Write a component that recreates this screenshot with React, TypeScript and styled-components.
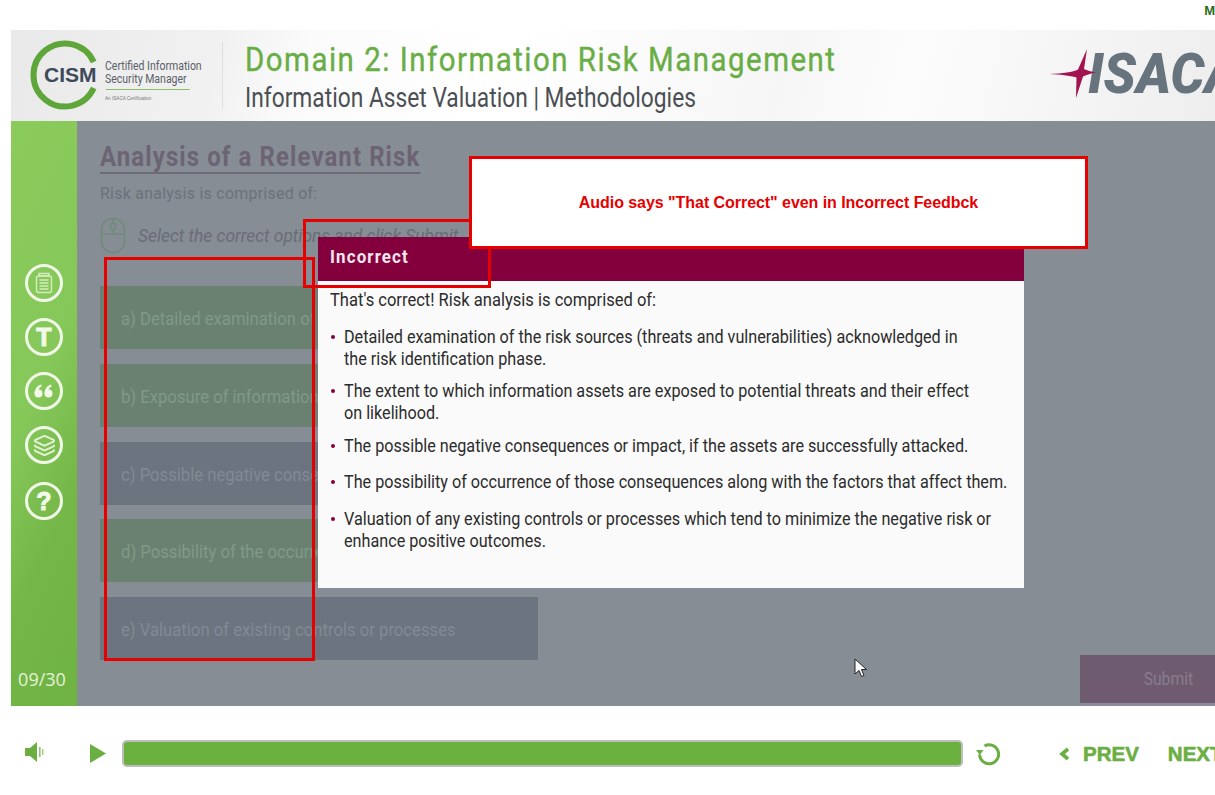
import React, { FC } from 'react'
import styled, { createGlobalStyle } from 'styled-components'
import { Layers } from 'lucide-react'

const narrow = `Roboto, "Liberation Sans", sans-serif`

const GlobalStyle = createGlobalStyle`
  html, body {
    margin: 0;
    padding: 0;
    background: #fff;
    overflow: hidden;
  }
`

const options = [
  { label: 'a) Detailed examination of risk sources', tone: 'green' },
  { label: 'b) Exposure of information assets', tone: 'green' },
  { label: 'c) Possible negative consequences', tone: 'gray' },
  { label: 'd) Possibility of the occurrence', tone: 'green' },
  { label: 'e) Valuation of existing controls or processes', tone: 'gray' },
]

const feedback = [
  ['Detailed examination of the risk sources (threats and vulnerabilities) acknowledged in', 'the risk identification phase.'],
  ['The extent to which information assets are exposed to potential threats and their effect', 'on likelihood.'],
  ['The possible negative consequences or impact, if the assets are successfully attacked.'],
  ['The possibility of occurrence of those consequences along with the factors that affect them.'],
  ['Valuation of any existing controls or processes which tend to minimize the negative risk or', 'enhance positive outcomes.'],
]

const CismLogo: FC = () => (
  <LogoWrap>
    <Ring viewBox="0 0 70 70">
      <path d="M63.700 22 A31.500 31.500 0 1 0 63.700 48" fill="none" stroke="#5ea63a" strokeWidth="6" />
    </Ring>
    <CismText>CISM</CismText>
    <LogoCopy>
      <LogoLine>Certified Information</LogoLine>
      <LogoLine>Security Manager</LogoLine>
      <LogoRule />
      <LogoSmall>An ISACA Certification</LogoSmall>
    </LogoCopy>
  </LogoWrap>
)

const NotesIcon: FC = () => (
  <svg width="20" height="22" viewBox="0 0 20 22" fill="none" stroke="#d5ecc0" strokeWidth="1.4">
    <path d="M5 1.500h10v2.500H5z" />
    <rect x="2.500" y="4" width="15" height="16.500" rx="2" />
    <path d="M5.500 8h9M5.500 11h9M5.500 14h9M5.500 17h9" />
  </svg>
)

const QuoteIcon: FC = () => (
  <svg width="20" height="14" viewBox="0 0 20 14" fill="#f2f9ea">
    <circle cx="4.500" cy="9.500" r="4" />
    <path d="M0.600 9C0.800 5 3 1.500 7 0.500L7.800 2.200C5.500 3.200 4.500 5 4.500 7z" />
    <circle cx="14.500" cy="9.500" r="4" />
    <path d="M10.600 9C10.800 5 13 1.500 17 0.500L17.800 2.200C15.500 3.200 14.500 5 14.500 7z" />
  </svg>
)

const MouseIcon: FC = () => (
  <svg width="26" height="37" viewBox="0 0 26 37" fill="none" stroke="#6e8c78" strokeWidth="1.6">
    <rect x="1.500" y="1.500" width="23" height="34" rx="11" />
    <path d="M1.500 17h23M13 1.500V6M13 13v4" />
    <rect x="10.500" y="6" width="5" height="7" rx="2.500" />
  </svg>
)

export default function App() {
  return (
    <Page>
      <GlobalStyle />
      <TopStrip>M</TopStrip>
      <Stage>
        <Header>
          <CismLogo />
          <HeaderDivider />
          <Titles>
            <DomainTitle>Domain 2: Information Risk Management</DomainTitle>
            <TopicTitle>Information Asset Valuation | Methodologies</TopicTitle>
          </Titles>
          <IsacaLogo>
            <IsacaText>ISACA</IsacaText>
            <Star viewBox="0 0 48 50">
              <path d="M0 25 C14 24.500 24 23 29 20.500 L38 0 L35 20 C38 21.500 42 22.500 47 23.500 C42 24.500 38 25.500 34 27.500 L27 49 L27.500 28.500 C20 26.500 12 25.500 0 25Z" fill="#a3134f" />
            </Star>
          </IsacaLogo>
        </Header>
        <Body>
          <Sidebar>
            <NavIcon><NotesIcon /></NavIcon>
            <NavIcon>T</NavIcon>
            <NavIcon><QuoteIcon /></NavIcon>
            <NavIcon><Layers size={23} strokeWidth={2} color="#e4f3d6" /></NavIcon>
            <NavIcon $drop>?</NavIcon>
            <Counter>09/30</Counter>
          </Sidebar>
          <Content>
            <SlideTitle>Analysis of a Relevant Risk</SlideTitle>
            <Lead>Risk analysis is comprised of:</Lead>
            <Instruction>
              <MouseIcon />
              <InstructionText>Select the correct options and click Submit</InstructionText>
            </Instruction>
            <OptionList>
              {options.map(o => (
                <OptionRow key={o.label} $tone={o.tone}>
                  <OptionLabel>{o.label}</OptionLabel>
                </OptionRow>
              ))}
            </OptionList>
            <SubmitButton><SubmitLabel>Submit</SubmitLabel></SubmitButton>
          </Content>
          <Dialog>
            <DialogHead><DialogTitle>Incorrect</DialogTitle></DialogHead>
            <DialogBody>
              <DialogIntro>That&apos;s correct! Risk analysis is comprised of:</DialogIntro>
              <BulletList>
                {feedback.map(lines => (
                  <Bullet key={lines[0]} $single={lines.length === 1}>
                    {lines.map(l => <BulletLine key={l}>{l}</BulletLine>)}
                  </Bullet>
                ))}
              </BulletList>
            </DialogBody>
          </Dialog>
        </Body>
      </Stage>
      <Controls>
        <SoundButton>
          <svg width="19" height="20" viewBox="0 0 19 20" fill="#6bae42">
            <path d="M0 6h5l7-6v20l-7-6H0z" />
            <path d="M14 5h1.600v10H14zM17.200 7h1.200v6h-1.200z" opacity="0.75" />
          </svg>
        </SoundButton>
        <PlayButton>
          <svg width="16" height="19" viewBox="0 0 16 19" fill="#6bae42"><path d="M0 0l16 9.500L0 19z" /></svg>
        </PlayButton>
        <Progress />
        <ReplayButton>
          <svg width="26" height="26" viewBox="0 0 26 26" fill="none" stroke="#6bae42" strokeWidth="3">
            <path d="M8.500 5A9.500 9.500 0 1 1 3.600 13.500" />
            <path d="M0 9h7.500l-3.700 5z" fill="#6bae42" stroke="none" />
          </svg>
        </ReplayButton>
        <NavLink $first>
          <svg width="11" height="14" viewBox="0 0 11 14" fill="none" stroke="#6bae42" strokeWidth="3.600">
            <path d="M9 2L3 7l6 5" />
          </svg>
          <span>PREV</span>
        </NavLink>
        <NavLink>NEXT</NavLink>
      </Controls>

      <RedFrame $kind="options" />
      <RedFrame $kind="head" />
      <Note>Audio says &quot;That Correct&quot; even in Incorrect Feedbck</Note>
      <Cursor viewBox="0 0 13 21">
        <path d="M1 1v15l4-3.500 2.500 6 2.500-1-2.500-6H12.500z" fill="#fff" stroke="#222" strokeWidth="1" />
      </Cursor>
    </Page>
  )
}

const Page = styled.div`
  position: relative;
  width: 1215px;
  height: 795px;
  overflow: hidden;
  background: #fff;
`

const TopStrip = styled.div`
  height: 30px;
  padding-top: 3px;
  box-sizing: border-box;
  text-align: right;
  font: bold 13px "Liberation Sans", sans-serif;
  color: #2f6b14;
  line-height: 15px;
`

const Stage = styled.div`
  width: 1240px;
  margin-left: 11px;
`

const Header = styled.header`
  height: 91px;
  display: flex;
  align-items: center;
  background: linear-gradient(105deg, #e9e9e9 0%, #f1f1f1 17%, #fbfbfb 24%, #fff 40%, #f6f6f6 62%, #fcfcfc 72%, #ececec 100%);
`

const LogoWrap = styled.div`
  position: relative;
  width: 211px;
  height: 91px;
  flex: none;
`

const Ring = styled.svg`
  position: absolute;
  left: 19px;
  top: 10px;
  width: 70px;
  height: 70px;
`

const CismText = styled.span`
  position: absolute;
  left: 33px;
  top: 33px;
  font: bold 21px "Liberation Sans", sans-serif;
  color: #3d4a5c;
`

const LogoCopy = styled.div`
  position: absolute;
  left: 94px;
  top: 29px;
  width: 120px;
  white-space: nowrap;
  transform: scaleX(0.84);
  transform-origin: left;
`

const LogoLine = styled.div`
  font: 12.5px/13px ${narrow};
  color: #59606a;
`

const LogoRule = styled.div`
  height: 1px;
  width: 100px;
  margin: 4px 0 5px 1px;
  background: #8cbf6d;
`

const LogoSmall = styled.div`
  font: 5.5px/7px "Liberation Sans", sans-serif;
  color: #777;
`

const HeaderDivider = styled.div`
  width: 1px;
  height: 67px;
  background: #dedede;
  flex: none;
`

const Titles = styled.div`
  margin-left: 22px;
  margin-top: 2px;
  display: flex;
  flex-direction: column;
  gap: 4px;
  white-space: nowrap;
  transform-origin: left;
`

const DomainTitle = styled.h1`
  margin: 0;
  font: normal 34px/38px ${narrow};
  letter-spacing: 1.75px;
  color: #69ad45;
  -webkit-text-stroke: 0.4px #69ad45;
  transform: scaleX(0.865);
  transform-origin: left;
`

const TopicTitle = styled.h2`
  margin: 0;
  font: normal 27px/32px ${narrow};
  color: #4b4f54;
  transform: scaleX(0.843);
  transform-origin: left;
`

const IsacaLogo = styled.div`
  position: relative;
  margin-left: auto;
  margin-right: 37px;
  width: 165px;
  height: 50px;
  margin-top: -3px;
  flex: none;
`

const Star = styled.svg`
  position: absolute;
  left: 0;
  top: 0;
  width: 48px;
  height: 50px;
`

const IsacaText = styled.span`
  position: absolute;
  left: 39px;
  top: -5px;
  font: italic 900 56px/60px ${narrow};
  color: #67747e;
  transform: scaleX(0.95);
  transform-origin: left;
`

const Body = styled.div`
  position: relative;
  display: flex;
  height: 585px;
  background: #868d95;
`

const Sidebar = styled.nav`
  width: 66px;
  flex: none;
  display: flex;
  flex-direction: column;
  align-items: center;
  gap: 16px;
  padding-top: 143px;
  box-sizing: border-box;
  background: linear-gradient(115deg, #8acb5c 0%, #86c759 45%, #74b648 70%, #6fb344 100%);
`

const NavIcon = styled.div<{ $drop?: boolean }>`
  width: 38px;
  height: 38px;
  margin-top: ${p => (p.$drop ? '2px' : '0')};
  box-sizing: border-box;
  border: 3px solid #f0f8e8;
  border-radius: 50%;
  display: flex;
  align-items: center;
  justify-content: center;
  font: 900 25px/1 "Liberation Sans", sans-serif;
  -webkit-text-stroke: 1px #f2f9ea;
  color: #f2f9ea;
`

const Counter = styled.div`
  margin-top: auto;
  margin-left: -4px;
  height: 54px;
  font: 18px/54px "Open Sans", sans-serif;
  color: #e4f3d6;
`

const Content = styled.main`
  flex: 1;
  display: flex;
  flex-direction: column;
  padding: 20px 20px 3px 23px;
  min-width: 0;
`

const SlideTitle = styled.h3`
  margin: 0;
  align-self: flex-start;
  font: bold 28px/31px ${narrow};
  letter-spacing: 1.3px;
  color: #6c6373;
  border-bottom: 2px solid #6f6a78;
  transform: scaleX(0.855);
  transform-origin: left;
`

const Lead = styled.p`
  margin: 9px 0 0;
  font: 17px/20px ${narrow};
  color: #6b727b;
  letter-spacing: 0.3px;
  transform: scaleX(0.935);
  transform-origin: left;
`

const Instruction = styled.div`
  display: flex;
  align-items: center;
  gap: 12px;
  margin-top: 14px;
  height: 38px;
`

const InstructionText = styled.span`
  font: italic 18px/22px ${narrow};
  color: #6a6c78;
  white-space: nowrap;
  transform: scaleX(0.965);
  transform-origin: left;
`

const OptionList = styled.div`
  width: 438px;
  margin-top: 32px;
  display: flex;
  flex-direction: column;
  gap: 14.75px;
`

const OptionRow = styled.div<{ $tone: string }>`
  height: 63px;
  padding-left: 21px;
  background: ${p => (p.$tone === 'green' ? '#6a8171' : '#6b747f')};
  color: ${p => (p.$tone === 'green' ? '#7f9a88' : '#828a94')};
`

const OptionLabel = styled.div`
  font: 19px/65px ${narrow};
  white-space: nowrap;
  transform: scaleX(0.877);
  transform-origin: left;
`

const SubmitButton = styled.div`
  align-self: flex-end;
  flex: none;
  width: 176px;
  height: 48px;
  margin-top: -5px;
  margin-right: -25px;
  text-align: center;
  background: #6f5b6f;
  color: #877d8c;
`

const SubmitLabel = styled.span`
  display: inline-block;
  font: 18px/48px ${narrow};
  transform: scaleX(0.87);
`

const Dialog = styled.section`
  position: absolute;
  left: 307px;
  top: 116px;
  width: 706px;
  height: 351px;
  background: #fafafa;
`

const DialogHead = styled.div`
  height: 44px;
  padding-left: 12px;
  background: #84003c;
  color: #f6e6ee;
`

const DialogTitle = styled.div`
  font: bold 18px/40px ${narrow};
  letter-spacing: 1.2px;
  transform: scaleX(0.94);
  transform-origin: left;
`

const DialogBody = styled.div`
  padding: 8px 12px 0;
`

const DialogIntro = styled.p`
  margin: 0;
  font: 17.6px/22px ${narrow};
  color: #2b2b2b;
  white-space: nowrap;
  transform: scaleX(0.94);
  transform-origin: left;
`

const BulletList = styled.ul`
  list-style: none;
  margin: 15px 0 0;
  padding: 0 0 0 14px;
  display: flex;
  flex-direction: column;
  gap: 10.3px;
`

const Bullet = styled.li<{ $single: boolean }>`
  position: relative;
  padding-bottom: ${p => (p.$single ? '4.6px' : '0')};
  font: 17.6px/22px ${narrow};
  color: #2b2b2b;
  &::before {
    content: '';
    position: absolute;
    left: -13px;
    top: 9px;
    width: 4px;
    height: 4px;
    border-radius: 50%;
    background: #84003c;
  }
`

const BulletLine = styled.div`
  white-space: nowrap;
  transform: scaleX(0.92);
  transform-origin: left;
`

const Controls = styled.footer`
  height: 89px;
  display: flex;
  align-items: center;
  box-sizing: border-box;
  padding: 6px 0 0 25px;
  position: relative;
  white-space: nowrap;
`

const SoundButton = styled.div`
  width: 19px;
  height: 20px;
  margin-top: -3px;
  flex: none;
`

const PlayButton = styled.div`
  margin-left: 46px;
  width: 16px;
  height: 19px;
  flex: none;
`

const Progress = styled.div`
  margin-left: 16px;
  width: 841px;
  height: 27px;
  box-sizing: border-box;
  flex: none;
  border: 2px solid #bdbdbd;
  border-radius: 5px;
  background: #6bb13f;
`

const ReplayButton = styled.div`
  margin-left: 13px;
  width: 26px;
  height: 26px;
  flex: none;
`

const NavLink = styled.div<{ $first?: boolean }>`
  margin-left: ${p => (p.$first ? '57px' : '29px')};
  flex: none;
  display: flex;
  align-items: center;
  gap: 13px;
  font: bold 20.5px/26px "Liberation Sans", sans-serif;
  color: #6bae42;
  -webkit-text-stroke: 0.6px #6bae42;
`

const RedFrame = styled.div<{ $kind: string }>`
  position: absolute;
  box-sizing: border-box;
  border: 3px solid #e60000;
  left: ${p => (p.$kind === 'options' ? '104px' : '303px')};
  top: ${p => (p.$kind === 'options' ? '257px' : '219px')};
  width: ${p => (p.$kind === 'options' ? '211px' : '188px')};
  height: ${p => (p.$kind === 'options' ? '404px' : '69px')};
`

const Note = styled.div`
  position: absolute;
  left: 469px;
  top: 156px;
  width: 619px;
  height: 93px;
  box-sizing: border-box;
  border: 3px solid #e60000;
  background: #fff;
  text-align: center;
  font: bold 16px/87px "Liberation Sans", sans-serif;
  letter-spacing: -0.05px;
  color: #e60000;
`

const Cursor = styled.svg`
  position: absolute;
  left: 854px;
  top: 658px;
  width: 13px;
  height: 21px;
`
